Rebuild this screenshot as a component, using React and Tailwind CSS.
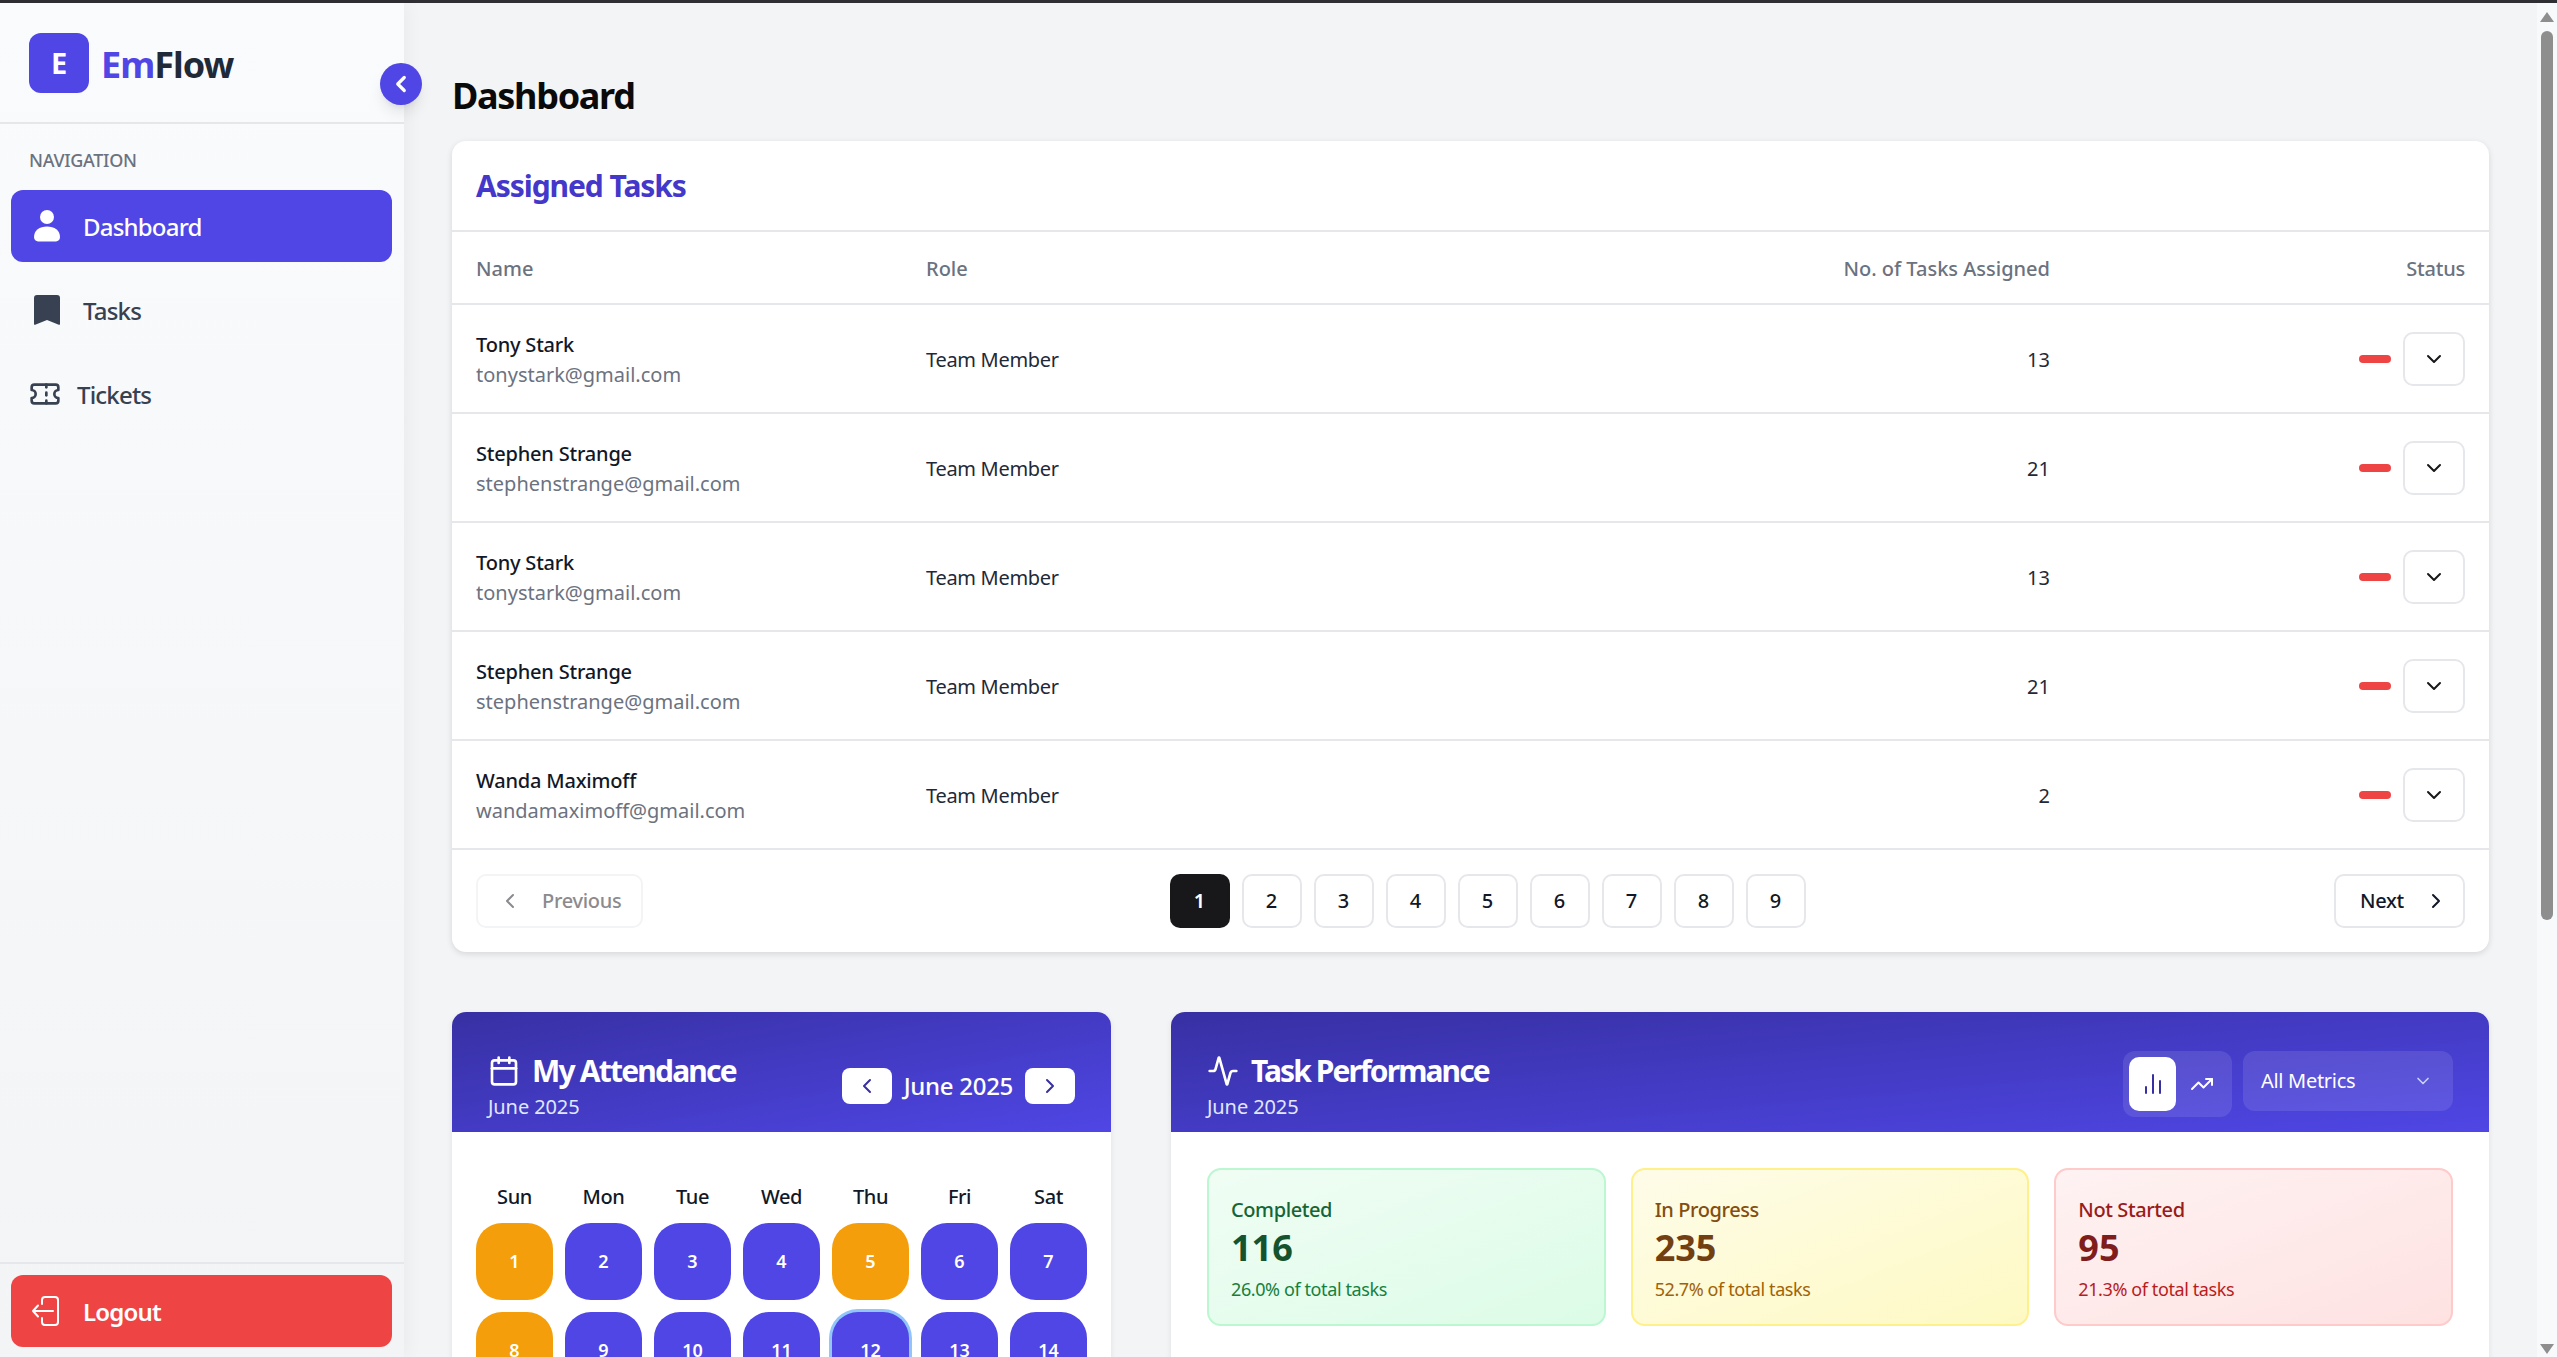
import React from 'react';
import { Activity, Calendar, ChartNoAxesColumn, ChevronDown, ChevronLeft, ChevronRight, Ticket, TrendingUp } from 'lucide-react';

const members = [
  { name: 'Tony Stark', email: 'tonystark@gmail.com', tasks: 13 },
  { name: 'Stephen Strange', email: 'stephenstrange@gmail.com', tasks: 21 },
  { name: 'Tony Stark', email: 'tonystark@gmail.com', tasks: 13 },
  { name: 'Stephen Strange', email: 'stephenstrange@gmail.com', tasks: 21 },
  { name: 'Wanda Maximoff', email: 'wandamaximoff@gmail.com', tasks: 2 },
];

const weekdays = ['Sun', 'Mon', 'Tue', 'Wed', 'Thu', 'Fri', 'Sat'];
const days = Array.from({ length: 14 }, (_, i) => i + 1);
const lateDays = [1, 5, 8];

const stats = [
  {
    label: 'Completed', value: 116, pct: '26.0% of total tasks',
    box: 'from-[#f0fdf4] to-[#dcfce7] border-[#bbf7d0]',
    labelColor: 'text-[#166534]', valueColor: 'text-[#14532d]', pctColor: 'text-[#15803d]',
  },
  {
    label: 'In Progress', value: 235, pct: '52.7% of total tasks',
    box: 'from-[#fefce8] to-[#fef9c3] border-[#fef08a]',
    labelColor: 'text-[#854d0e]', valueColor: 'text-[#713f12]', pctColor: 'text-[#a16207]',
  },
  {
    label: 'Not Started', value: 95, pct: '21.3% of total tasks',
    box: 'from-[#fef2f2] to-[#fee2e2] border-[#fecaca]',
    labelColor: 'text-[#991b1b]', valueColor: 'text-[#7f1d1d]', pctColor: 'text-[#b91c1c]',
  },
];

function PersonIcon() {
  return (
    <svg width="26" height="32" viewBox="0 0 26 32" fill="white">
      <circle cx="13" cy="7" r="7" />
      <path d="M0 27c0-6.5 5.5-10.500 13-10.500S26 20.500 26 27c0 3-2 4-4 4.500H4C2 31 0 30 0 27z" />
    </svg>
  );
}

function BookmarkIcon() {
  return (
    <svg width="26" height="30" viewBox="0 0 26 30" fill="#374151">
      <path d="M0 3a3 3 0 0 1 3-3h20a3 3 0 0 1 3 3v26a.8.8 0 0 1-1.200.700L13 25 1.200 29.700A.8.8 0 0 1 0 29z" />
    </svg>
  );
}

function LogoutIcon() {
  return (
    <svg width="28" height="30" viewBox="0 0 28 30" fill="none" stroke="white" strokeWidth="2" strokeLinecap="round" strokeLinejoin="round">
      <path d="M10 8V4a3 3 0 0 1 3-3h10a3 3 0 0 1 3 3v22a3 3 0 0 1-3 3H13a3 3 0 0 1-3-3v-4" />
      <path d="M21 15H1M6 9.500 1 15l5 5.500" />
    </svg>
  );
}

function Sidebar() {
  return (
    <aside className="relative z-10 flex w-[404px] shrink-0 flex-col bg-gradient-to-b from-[#fafbfc] to-[#f3f4f6] shadow-[4px_0_16px_rgba(0,0,0,0.04)]">
      <div className="flex h-[121px] items-center gap-[12px] border-b-2 border-[#e5e7eb] pl-[29px]">
        <div className="flex h-[60px] w-[60px] items-center justify-center rounded-[12px] bg-[#4f46e5] text-[29px] font-bold text-white">E</div>
        <div className="pt-[5px] text-[36px] font-bold tracking-[-1px] text-[#1f2937]"><span className="text-[#4f46e5]">Em</span>Flow</div>
      </div>

      <div className="flex flex-1 flex-col pl-[11px] pr-[12px] pt-[24px]">
        <div className="pl-[18px] text-[18px] font-medium leading-[24px] tracking-[-0.3px] text-[#6b7280]">NAVIGATION</div>
        <div className="mt-[18px] flex h-[72px] items-center gap-[23px] rounded-[12px] bg-[#4f46e5] pl-[23px] text-[24px] font-medium tracking-[-0.8px] text-white">
          <PersonIcon />
          <span className="pt-[2px]">Dashboard</span>
        </div>
        <div className="mt-[12px] flex h-[72px] items-center gap-[23px] pl-[23px] text-[24px] font-medium tracking-[-0.8px] text-[#374151]">
          <BookmarkIcon />
          <span className="pt-[2px]">Tasks</span>
        </div>
        <div className="mt-[12px] flex h-[72px] items-center gap-[16px] pl-[18px] text-[24px] font-medium tracking-[-0.8px] text-[#374151]">
          <Ticket size={32} strokeWidth={2} />
          <span className="pt-[2px]">Tickets</span>
        </div>
      </div>

      <div className="border-t-2 border-[#e5e7eb] pb-[10px] pl-[11px] pr-[12px] pt-[11px]">
        <div className="flex h-[72px] items-center gap-[23px] rounded-[12px] bg-[#ef4444] pl-[21px] text-[24px] font-semibold tracking-[-0.8px] text-white">
          <LogoutIcon />
          <span className="pt-[2px]">Logout</span>
        </div>
      </div>

      <button className="absolute left-[380px] top-[60px] flex h-[42px] w-[42px] items-center justify-center rounded-full bg-[#4f46e5] text-white shadow-lg">
        <ChevronLeft size={26} strokeWidth={3} />
      </button>
    </aside>
  );
}

function AssignedTasks() {
  return (
    <section className="rounded-[14px] bg-white shadow-[0_2px_6px_rgba(0,0,0,0.12)]">
      <h2 className="flex h-[91px] items-center border-b-2 border-[#e5e7eb] px-[24px] text-[30px] font-bold tracking-[-1.05px] text-[#4338ca]">Assigned Tasks</h2>
      <div className="grid h-[73px] grid-cols-[450px_1fr_250px_415px] items-center border-b-2 border-[#e5e7eb] px-[24px] pt-[3px] text-[20px] font-medium text-[#6b7280]">
        <div>Name</div>
        <div>Role</div>
        <div className="text-right">No. of Tasks Assigned</div>
        <div className="text-right tracking-[-0.2px]">Status</div>
      </div>
      {members.map((m, i) => (
        <div key={i} className="grid h-[109px] grid-cols-[450px_1fr_250px_415px] items-center border-b-2 border-[#e5e7eb] px-[24px] text-[20px]">
          <div className="pt-[3px]">
            <div className="font-medium leading-[30px] tracking-[-0.2px] text-[#111827]">{m.name}</div>
            <div className="leading-[30px] text-[#6b7280]">{m.email}</div>
          </div>
          <div className="pt-[3px] tracking-[-0.3px] text-[#1f2937]">Team Member</div>
          <div className="pt-[3px] text-right text-[#1f2937]">{m.tasks}</div>
          <div className="flex items-center justify-end gap-[12px]">
            <span className="h-[8px] w-[32px] rounded-full bg-[#ef4444]" />
            <button className="flex h-[54px] w-[62px] items-center justify-center rounded-[10px] border-2 border-[#e5e7eb] bg-white text-[#18181b]">
              <ChevronDown size={24} strokeWidth={2} />
            </button>
          </div>
        </div>
      ))}
      <div className="flex h-[102px] items-center justify-between px-[24px]">
        <button className="flex h-[54px] w-[167px] items-center gap-[20px] rounded-[10px] border-2 border-[#f3f4f6] pl-[20px] text-[20px] font-medium tracking-[-0.3px] text-[#8b8b8f]">
          <ChevronLeft size={24} strokeWidth={2} />
          Previous
        </button>
        <div className="flex gap-[12px] pr-[2px]">
          {[1, 2, 3, 4, 5, 6, 7, 8, 9].map(n => (
            <button
              key={n}
              className={n === 1
                ? 'flex h-[54px] w-[60px] items-center justify-center rounded-[10px] bg-[#18181b] text-[20px] font-semibold text-white'
                : 'flex h-[54px] w-[60px] items-center justify-center rounded-[10px] border-2 border-[#e5e7eb] text-[20px] font-medium text-[#111827]'}
            >
              {n}
            </button>
          ))}
        </div>
        <button className="flex h-[54px] w-[131px] items-center gap-[20px] rounded-[10px] border-2 border-[#e5e7eb] pl-[24px] text-[20px] font-medium tracking-[-0.3px] text-[#111827]">
          Next
          <ChevronRight size={24} strokeWidth={2} />
        </button>
      </div>
    </section>
  );
}

function Attendance() {
  return (
    <section className="overflow-hidden rounded-[14px] bg-white shadow-[0_2px_6px_rgba(0,0,0,0.08)]">
      <div className="flex h-[120px] items-center justify-between bg-gradient-to-br from-[#3730a3] to-[#4f46e5] pl-[36px] pr-[36px] pt-[27px] text-white">
        <div>
          <div className="flex items-center gap-[12px] text-[30px] font-bold leading-[40px] tracking-[-1.8px]">
            <Calendar size={32} strokeWidth={2} />
            My Attendance
          </div>
          <div className="mt-[2px] text-[20px] leading-[28px] tracking-[-0.1px] text-[#e0e7ff]">June 2025</div>
        </div>
        <div className="flex items-center gap-[12px]">
          <button className="flex h-[36px] w-[50px] items-center justify-center rounded-[8px] bg-white text-[#3730a3]"><ChevronLeft size={24} strokeWidth={2} /></button>
          <span className="text-[24px] font-medium tracking-[-0.3px]">June 2025</span>
          <button className="flex h-[36px] w-[50px] items-center justify-center rounded-[8px] bg-white text-[#3730a3]"><ChevronRight size={24} strokeWidth={2} /></button>
        </div>
      </div>
      <div className="px-[24px] pt-[48px]">
        <div className="grid grid-cols-7 gap-x-[12px] text-center text-[20px] font-medium leading-[34px] tracking-[-0.4px] text-[#111827]">
          {weekdays.map(d => <div key={d}>{d}</div>)}
        </div>
        <div className="mt-[9px] grid grid-cols-7 gap-x-[12px] gap-y-[12px]">
          {days.map(d => (
            <div
              key={d}
              className={
                (lateDays.includes(d) ? 'bg-[#f59e0b] ' : 'bg-[#4f46e5] ')
                + (d === 12 ? 'ring-[3px] ring-[#93c5fd] ' : '')
                + 'flex h-[77px] items-center justify-center rounded-[26px] text-[18px] font-semibold text-white'
              }
            >
              {d}
            </div>
          ))}
        </div>
      </div>
    </section>
  );
}

function TaskPerformance() {
  return (
    <section className="overflow-hidden rounded-[14px] bg-white shadow-[0_2px_6px_rgba(0,0,0,0.08)]">
      <div className="flex h-[120px] items-center justify-between bg-gradient-to-br from-[#3730a3] to-[#4f46e5] px-[36px] text-white">
        <div className="pt-[27px]">
          <div className="flex items-center gap-[12px] text-[30px] font-bold leading-[40px] tracking-[-1.9px]">
            <Activity size={32} strokeWidth={2} />
            Task Performance
          </div>
          <div className="mt-[2px] text-[20px] leading-[28px] tracking-[-0.1px] text-[#e0e7ff]">June 2025</div>
        </div>
        <div className="mt-[24px] flex items-start gap-[11px]">
          <div className="flex h-[66px] w-[109px] items-start gap-[8px] rounded-[12px] bg-white/10 p-[6px]">
            <div className="flex h-[54px] w-[47px] items-center justify-center rounded-[10px] bg-white text-[#3730a3]"><ChartNoAxesColumn size={24} strokeWidth={2} /></div>
            <div className="flex h-[54px] w-[36px] items-center justify-center"><TrendingUp size={24} strokeWidth={2} /></div>
          </div>
          <div className="flex h-[60px] w-[210px] items-center justify-between rounded-[12px] bg-white/10 pl-[18px] pr-[20px] text-[20px] tracking-[-0.3px]">
            All Metrics
            <ChevronDown size={20} strokeWidth={2} className="text-[#c7d2fe]" />
          </div>
        </div>
      </div>
      <div className="grid grid-cols-3 gap-[25px] px-[36px] pt-[36px]">
        {stats.map(s => (
          <div key={s.label} className={'h-[158px] rounded-[14px] border-2 bg-gradient-to-br px-[22px] pt-[25px] ' + s.box}>
            <div className={'text-[20px] font-medium leading-[30px] tracking-[-0.4px] ' + s.labelColor}>{s.label}</div>
            <div className={'text-[36px] font-bold leading-[46px] ' + s.valueColor}>{s.value}</div>
            <div className={'mt-[5px] text-[18px] leading-[26px] tracking-[-0.4px] ' + s.pctColor}>{s.pct}</div>
          </div>
        ))}
      </div>
    </section>
  );
}

function Scrollbar() {
  return (
    <div className="flex w-[20px] shrink-0 flex-col items-center bg-[#f8f9fa] pt-[9px]">
      <div className="h-0 w-0 border-x-[7px] border-b-[10px] border-x-transparent border-b-[#8e8e8e]" />
      <div className="mt-[9px] h-[889px] w-[12px] rounded-full bg-[#8e8e8e]" />
      <div className="mt-auto mb-[3px] h-0 w-0 border-x-[7px] border-t-[10px] border-x-transparent border-t-[#8e8e8e]" />
    </div>
  );
}

export default function App() {
  return (
    <div className="flex h-[1357px] flex-col overflow-hidden bg-[#f3f4f6] font-['Noto_Sans',sans-serif]">
      <div className="h-[3px] shrink-0 bg-[#2f2f33]" />
      <div className="flex min-h-0 flex-1">
        <Sidebar />
        <main className="min-w-0 flex-1 overflow-hidden px-[48px] pt-[69px]">
          <h1 className="mb-[21px] text-[36px] font-bold leading-[48px] tracking-[-1.3px] text-[#0a0a0a]">Dashboard</h1>
          <AssignedTasks />
          <div className="mt-[60px] grid grid-cols-[1fr_2fr] gap-[60px]">
            <Attendance />
            <TaskPerformance />
          </div>
        </main>
        <Scrollbar />
      </div>
    </div>
  );
}
